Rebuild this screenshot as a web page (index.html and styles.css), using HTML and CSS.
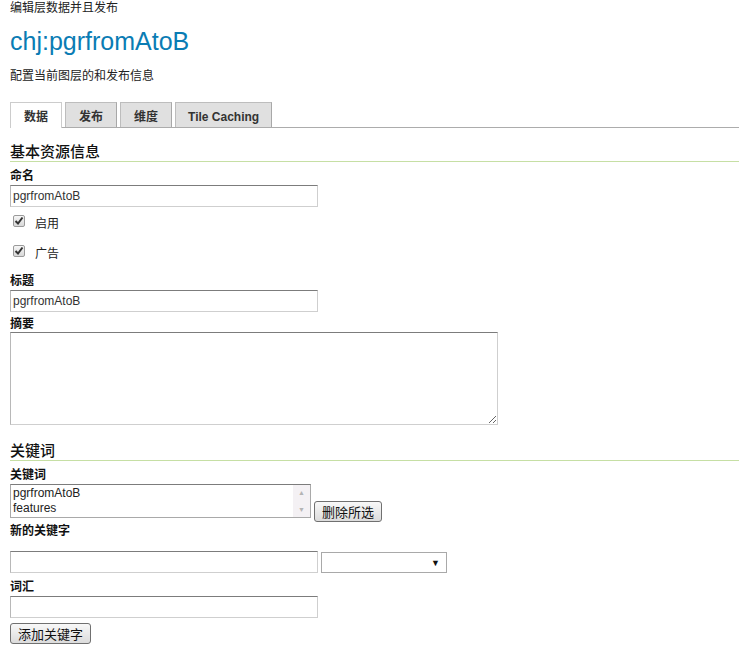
FILE: index.html
```html
<!DOCTYPE html>
<html>
<head>
<meta charset="utf-8">
<title>编辑层数据并且发布</title>
<link rel="stylesheet" href="styles.css">
</head>
<body>
<div class="page">
  <p class="crumb">编辑层数据并且发布</p>
  <h1 class="title">chj:pgrfromAtoB</h1>
  <p class="desc">配置当前图层的和发布信息</p>
  <ul class="tabs">
    <li class="tab active">数据</li>
    <li class="tab">发布</li>
    <li class="tab">维度</li>
    <li class="tab tab-latin">Tile Caching</li>
  </ul>

  <h2 class="section">基本资源信息</h2>
  <label class="lbl lbl-first">命名</label>
  <input class="text" type="text" value="pgrfromAtoB">
  <div class="check">
    <span class="box"><svg width="10" height="10" viewBox="0 0 10 10"><path d="M1.5 5 L4 7.5 L8.5 1.5" fill="none" stroke="#333" stroke-width="2"/></svg></span>
    <span>启用</span>
  </div>
  <div class="check">
    <span class="box"><svg width="10" height="10" viewBox="0 0 10 10"><path d="M1.5 5 L4 7.5 L8.5 1.5" fill="none" stroke="#333" stroke-width="2"/></svg></span>
    <span>广告</span>
  </div>
  <label class="lbl lbl-after-check">标题</label>
  <input class="text" type="text" value="pgrfromAtoB">
  <label class="lbl lbl-after-input">摘要</label>
  <textarea class="area"></textarea>

  <h2 class="section section-kw">关键词</h2>
  <label class="lbl lbl-first">关键词</label>
  <div class="kwrow">
    <div class="list">
      <div class="opts">
        <div class="opt">pgrfromAtoB</div>
        <div class="opt">features</div>
      </div>
      <div class="sb"><span class="sb-arrow">▲</span><span class="sb-arrow">▼</span></div>
    </div>
    <button class="btn btn-del" type="button">删除所选</button>
  </div>
  <label class="lbl lbl-new">新的关键字</label>
  <div class="newrow">
    <input class="text" type="text">
    <div class="select"><span class="sel-arrow">▼</span></div>
  </div>
  <label class="lbl lbl-after-check">词汇</label>
  <input class="text" type="text">
  <button class="btn btn-add" type="button">添加关键字</button>
</div>
</body>
</html>
```

FILE: styles.css
```css
html, body {
  margin: 0;
  padding: 0;
  background: #ffffff;
}

body {
  font-family: "Liberation Sans", "Noto Sans CJK SC", sans-serif;
  font-size: 12px;
  color: #222222;
}

.page {
  padding-left: 10px;
}

.crumb {
  margin: 0;
  line-height: 17px;
}

.title {
  margin: 9px 0 0;
  font-size: 25px;
  font-weight: normal;
  line-height: 30px;
  color: #0a7cb4;
}

.desc {
  margin: 12px 0 0;
  line-height: 17px;
}

.tabs {
  display: flex;
  align-items: flex-start;
  gap: 2px;
  list-style: none;
  margin: 17px 0 0;
  padding: 0;
  height: 25px;
  border-bottom: 1px solid #acacac;
}

.tab {
  box-sizing: border-box;
  height: 25px;
  padding: 2px 13px 0;
  line-height: 24px;
  font-weight: bold;
  color: #333333;
  background: #e0e0e0;
  border: 1px solid #bdbdbd;
  border-bottom: none;
  border-right-color: #a8a8a8;
}

.tab + .tab {
  margin-left: 1px;
}

.tab-latin {
  padding: 2px 12px 0;
}

.tab.active {
  background: #ffffff;
  height: 26px;
  border-color: #cccccc;
}

.section {
  margin: 15px 0 0;
  font-size: 15px;
  font-weight: 500;
  line-height: 18px;
  color: #111111;
  border-bottom: 1px solid #c6dfa4;
}

.section-kw {
  margin-top: 17px;
}

.lbl {
  display: block;
  font-weight: bold;
  line-height: 15px;
  color: #111111;
}

.lbl-first { margin-top: 7px; }
.lbl-after-check { margin-top: 7px; }
.lbl-after-input { margin-top: 5px; }
.lbl-new { margin-top: 2px; }

.text {
  display: block;
  box-sizing: border-box;
  width: 308px;
  height: 22px;
  margin: 1px 0 0;
  padding: 0 2px;
  border: 1px solid #cfcfcf;
  border-top-color: #7c7c7c;
  border-left-color: #b8b8b8;
  background: #ffffff;
  font-family: "Liberation Sans", "Noto Sans CJK SC", sans-serif;
  font-size: 12px;
  color: #333333;
  outline: none;
}

.check {
  display: flex;
  align-items: center;
  height: 30px;
  gap: 10px;
}

.box {
  box-sizing: border-box;
  display: flex;
  align-items: center;
  justify-content: center;
  width: 12px;
  height: 12px;
  margin-left: 3px;
  margin-top: -2px;
  border: 1px solid #9a9a9a;
  border-radius: 2px;
  background: linear-gradient(#f6f6f6, #d8d8d8);
}

.area {
  display: block;
  box-sizing: border-box;
  width: 488px;
  height: 93px;
  margin: 0;
  border: 1px solid #cfcfcf;
  border-top-color: #7c7c7c;
  border-left-color: #b8b8b8;
  background: #ffffff;
  outline: none;
}

.kwrow {
  display: flex;
  align-items: flex-start;
  margin-top: 1px;
}

.list {
  box-sizing: border-box;
  display: flex;
  width: 301px;
  height: 34px;
  border: 1px solid #a9a9a9;
  border-top-color: #7c7c7c;
  background: #ffffff;
}

.opts {
  flex: 1;
  padding: 1px 0 0 2px;
  line-height: 15px;
  color: #222222;
}

.sb {
  width: 17px;
  display: flex;
  flex-direction: column;
  justify-content: space-between;
  align-items: center;
  background: #f4f1f4;
  padding: 3px 0;
  box-sizing: border-box;
}

.sb-arrow {
  font-size: 7px;
  line-height: 9px;
  color: #b4b4b4;
}

.btn {
  box-sizing: border-box;
  height: 21px;
  padding: 0 7px;
  border: 1px solid #707070;
  border-radius: 3px;
  background: linear-gradient(#f8f8f8, #dcdcdc);
  font-family: "Noto Sans CJK SC", "Liberation Sans", sans-serif;
  font-size: 13px;
  line-height: 19px;
  color: #111111;
}

.btn-del {
  margin: 17px 0 0 3px;
}

.btn-add {
  display: block;
  margin-top: 5px;
}

.newrow {
  display: flex;
  gap: 3px;
  margin-top: 12px;
}

.newrow .text {
  margin-top: 0;
}

.select {
  box-sizing: border-box;
  display: flex;
  align-items: center;
  justify-content: flex-end;
  width: 126px;
  height: 21px;
  margin-top: 1px;
  padding-right: 6px;
  border: 1px solid #a9a9a9;
  background: #ffffff;
}

.sel-arrow {
  font-size: 9px;
  color: #111111;
}
```
